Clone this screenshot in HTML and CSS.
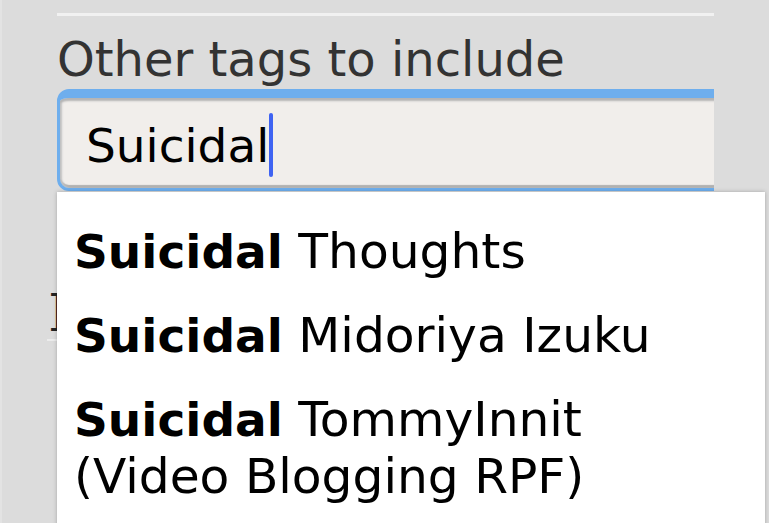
FILE: index.html
```html
<!DOCTYPE html>
<html lang="en">
<head>
    <meta charset="UTF-8">
    <meta name="viewport" content="width=device-width, initial-scale=1.0">
    <title>Other tags to include</title>
    <link rel="stylesheet" href="styles.css">
</head>
<body>

    <div class="panel">
        <div class="rule"></div>

        <label class="field-label" for="other-tags">Other tags to include</label>

        <div class="field">
            <div class="input-box">
                <span class="typed">Suicidal</span><span class="caret"></span>
            </div>
        </div>

        <!-- row hidden under the suggestions -->
        <div class="next-row">
            <span class="next-mark">]</span>
        </div>
        <div class="rule rule-low"></div>
    </div>

    <!-- Autocomplete suggestions -->
    <ul class="suggestions">
        <li><strong>Suicidal</strong> Thoughts</li>
        <li><strong>Suicidal</strong> Midoriya Izuku</li>
        <li><strong>Suicidal</strong> TommyInnit (Video Blogging RPF)</li>
    </ul>

</body>
</html>
```

FILE: styles.css
```css
body {
    font-family: 'DejaVu Sans', Verdana, sans-serif;
    margin: 0;
    padding: 0;
    background-color: #dcdcdc;
    border-left: 2px solid #e3e3e3;
    height: 523px;
    overflow: hidden;
    color: #000;
}
.panel {
    margin-left: 55px;
    width: 657px;
    padding-top: 13px;
}
.rule {
    height: 3px;
    background-color: #f1f1f1;
}
.field-label {
    display: block;
    margin-top: 15px;
    font-size: 48px;
    color: #333;
    line-height: 56px;
}
.field {
    margin-top: 2px;
    overflow: hidden;
}
.input-box {
    display: flex;
    align-items: center;
    height: 90px;
    width: 700px;
    padding-left: 26px;
    background-color: #f1eeeb;
    border: 3px solid #6eaeed;
    border-top-width: 9px;
    border-radius: 12px;
    box-shadow: inset 0 3px 2px #b5b5b5, inset 2px 0 2px #c4c4c4, inset 0 -3px 1px #b0b0b0;
}
.typed {
    font-size: 47px;
    color: #000;
    line-height: 1;
    margin-top: 4px;
}
.caret {
    width: 4px;
    height: 64px;
    border-radius: 2px;
    background-color: #3f63f2;
    margin-top: 4px;
}
.next-row {
    margin-top: 96px;
    margin-left: -10px;
    height: 52px;
}
.next-mark {
    font-size: 42px;
    color: #222;
}
.rule-low {
    margin-left: -10px;
    height: 2px;
    background-color: #ececec;
}
.suggestions {
    position: absolute;
    top: 192px;
    left: 57px;
    width: 708px;
    height: 340px;
    margin: 0;
    padding: 18px 0 0 0;
    list-style: none;
    background-color: #ffffff;
    box-shadow: 0 0 4px rgba(0, 0, 0, 0.25);
    box-sizing: border-box;
}
.suggestions li {
    padding: 13px 90px 14px 17px;
    font-size: 48.7px;
    line-height: 57px;
    color: #000;
}
.suggestions strong {
    font-size: 47px;
    font-weight: bold;
}
```
